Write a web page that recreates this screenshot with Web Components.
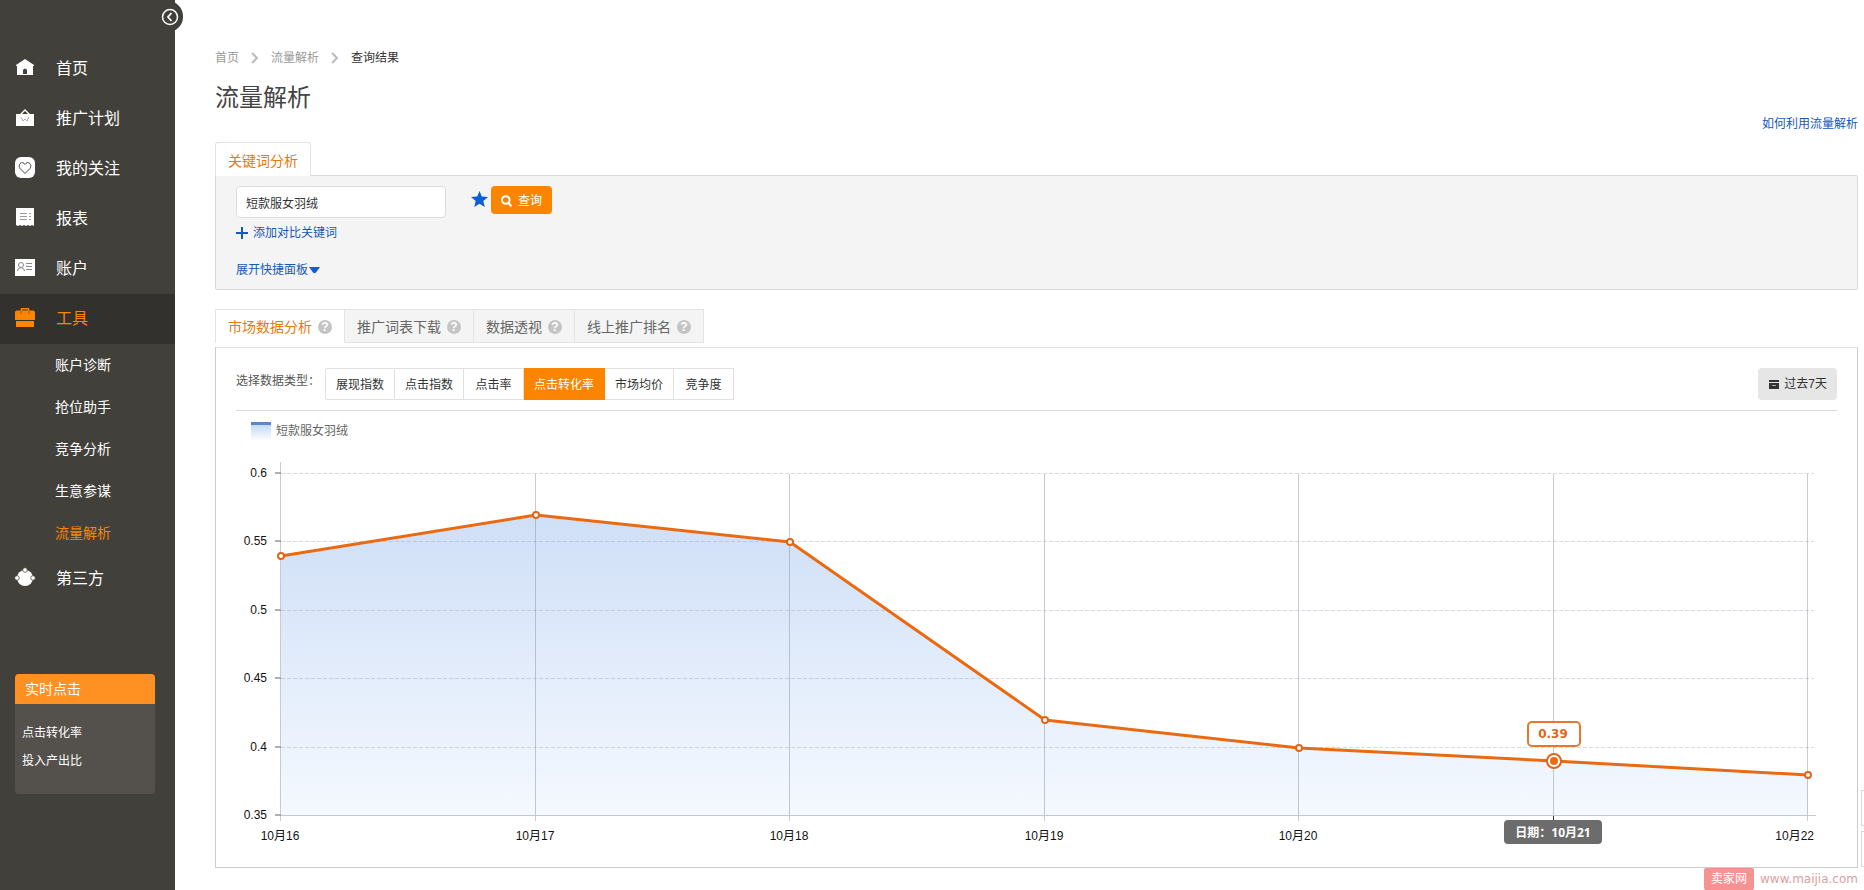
<!DOCTYPE html>
<html lang="zh-CN">
<head>
<meta charset="utf-8">
<title>流量解析</title>
<style>
html, body { margin: 0; }
body {
  font-family: "Liberation Sans", "Noto Sans CJK SC", sans-serif;
  font-size: 12px;
  line-height: 20px;
  color: #333;
  background: #fff;
  --orange: #fb8500;
  --link: #1558b8;
  --line: #d9d9d9;
}
</style>
</head>
<body>
<app-shell>
  <side-bar slot="side">
    <nav-item icon="home" label="首页"></nav-item>
    <nav-item icon="plan" label="推广计划"></nav-item>
    <nav-item icon="heart" label="我的关注"></nav-item>
    <nav-item icon="report" label="报表"></nav-item>
    <nav-item icon="account" label="账户"></nav-item>
    <nav-item icon="tools" label="工具" active></nav-item>
    <nav-item sub label="账户诊断"></nav-item>
    <nav-item sub label="抢位助手"></nav-item>
    <nav-item sub label="竞争分析"></nav-item>
    <nav-item sub label="生意参谋"></nav-item>
    <nav-item sub label="流量解析" active></nav-item>
    <nav-item icon="third" label="第三方"></nav-item>
    <live-card slot="card" heading="实时点击"><span>点击转化率</span><span>投入产出比</span></live-card>
  </side-bar>
  <page-head heading="流量解析"></page-head>
  <keyword-panel></keyword-panel>
  <tab-strip>
    <tab-button active>市场数据分析</tab-button>
    <tab-button>推广词表下载</tab-button>
    <tab-button>数据透视</tab-button>
    <tab-button>线上推广排名</tab-button>
  </tab-strip>
  <chart-panel>
    <data-filter slot="filter"></data-filter>
    <chart-legend slot="legend">短款服女羽绒</chart-legend>
    <trend-chart></trend-chart>
  </chart-panel>
  <site-mark slot="foot"></site-mark>
  <edge-tools slot="edge"></edge-tools>
</app-shell>

<script>
const ICONS = {
  home: '<path fill="currentColor" d="M9 1 18 7v1h-1v9H1V8H0V7z"/><path fill="#42403b" d="M7 16v-4q2-3 4 0v4z"/>',
  plan: '<path fill="currentColor" d="M0 6h4L9 1l5 5h4v12H0z"/><path fill="#42403b" d="M6 6l3-3 3 3z"/><path fill="none" stroke="#aaa" d="M5 9l2 4 2-2 2 2 2-4"/>',
  heart: '<rect x="-1" y="-1" width="20" height="21" rx="6" fill="currentColor"/><path fill="none" stroke="#42403b" d="M9 15.500 4 10.500C2 7.500 4 4.500 6.500 4.500Q8 5 9 6.500 10 5 11.500 4.500C14 4.500 16 7.500 14 10.500z"/>',
  report: '<path fill="currentColor" d="M0 0h18v18l-2-1-2 1-2-1-2 1-2-1-2 1-2-1-2 1-2-1z"/><path stroke="#999" d="M4 5.500h7M4 8.500h7M4 11.500h7M13 5.500h2M13 8.500h2M13 11.500h2"/>',
  account: '<path fill="currentColor" d="M-1 1h20v17H-1z"/><g fill="none" stroke="#888"><circle cx="5" cy="7" r="2.500"/><path d="M1.500 13q0-3 3.500-3.500Q8.500 10 8.500 13M10 5.500h6M10 8.500h6M10 11.500h6"/></g>',
  tools: '<path fill="none" stroke="currentColor" stroke-width="1.500" d="M5.500 3V.700h7V3"/><path fill="currentColor" d="M1 2.500h16q2 0 2 2V12H-1V4.500q0-2 2-2zM0 13h18v6H0z"/><path stroke="#33312d" stroke-width=".5" d="M5 3v3M13 3v3"/>',
  third: '<circle cx="9" cy="10" r="8" fill="currentColor"/><g fill="currentColor" stroke="#42403b" stroke-width=".7"><circle cx="9" cy="2" r="2.300"/><circle cx="1" cy="10" r="2.300"/><circle cx="17" cy="10" r="2.300"/></g>'
};

function define(name, render) {
  customElements.define(name, class extends HTMLElement {
    constructor() { super(); this.attachShadow({ mode: 'open' }); }
    connectedCallback() { this.shadowRoot.innerHTML = render(this); }
  });
}

define('app-shell', () => `
<style>
:host { display: grid; grid-template-columns: 175px minmax(0, 1fr); min-height: 100vh; position: relative; }
.main { display: flex; flex-direction: column; }
main { padding: 47px 6px 0 40px; }
</style>
<slot name="side"></slot>
<div class="main"><main><slot></slot></main><slot name="foot"></slot></div>
<slot name="edge"></slot>`);

define('side-bar', () => `
<style>
:host { display: block; position: relative; background: #42403b; color: #fff; }
nav { padding-top: 44px; }
.card { padding: 70px 20px 20px 15px; }
button { position: absolute; top: 1px; right: -8px; width: 30px; height: 31px; padding: 0 0 0 4px; border: 0; border-radius: 15px; background: #42403b; display: grid; place-items: center; }
</style>
<nav><slot></slot></nav>
<div class="card"><slot name="card"></slot></div>
<button type="button" aria-label="收起"><svg width="18" height="18" viewBox="0 0 18 18" fill="none" stroke="#fff"><circle cx="9" cy="9" r="7.500" stroke-width="1.500"/><path d="M10.500 5 7 9l3.500 4" stroke-width="1.800"/></svg></button>`);

define('nav-item', el => {
  const sub = el.hasAttribute('sub');
  const icon = el.getAttribute('icon');
  return `
<style>
:host { display: block; }
:host([active]) { color: var(--orange); }
:host([active][icon]) { background: #33312d; }
a { display: flex; align-items: center; height: 50px; padding-left: 16px; gap: 22px; color: inherit; text-decoration: none; font-size: 16px; }
a.sub { height: 42px; padding-left: 55px; font-size: 14px; }
svg { width: 18px; height: 18px; margin-bottom: 4px; overflow: visible; }
</style>
<a href="#" class="${sub ? 'sub' : ''}">${icon ? `<svg viewBox="0 0 18 18" aria-hidden="true">${ICONS[icon]}</svg>` : ''}<span>${el.getAttribute('label')}</span></a>`;
});

define('live-card', el => `
<style>
:host { display: block; border-radius: 4px; overflow: hidden; background: #54514c; color: #fff; }
h2 { margin: 0; padding: 0 10px; background: #ff9021; font-size: 14px; line-height: 30px; font-weight: 400; }
.rows { display: grid; grid-auto-rows: 28px; line-height: 28px; padding: 15px 7px 19px; }
</style>
<h2>${el.getAttribute('heading')}</h2><div class="rows"><slot></slot></div>`);

define('page-head', el => {
  const arrow = '<svg width="10" height="12" viewBox="0 0 10 12" fill="none" stroke="#bbb" stroke-width="2" aria-hidden="true"><path d="M2 1l5 5-5 5"/></svg>';
  return `
<style>
:host { display: block; }
nav { display: flex; align-items: center; gap: 11px; height: 22px; }
nav a { color: #999; text-decoration: none; }
h1 { margin: 12px 0 0; font-size: 24px; line-height: 34px; font-weight: 400; color: #444; }
.help { display: flex; justify-content: flex-end; height: 20px; margin-bottom: 7px; line-height: 18px; }
.help a { color: var(--link); text-decoration: none; }
</style>
<nav aria-label="位置"><a href="#">首页</a>${arrow}<a href="#">流量解析</a>${arrow}<span>查询结果</span></nav>
<h1>${el.getAttribute('heading')}</h1>
<div class="help"><a href="#">如何利用流量解析</a></div>`;
});

define('keyword-panel', () => `
<style>
:host { display: block; }
.tab { display: block; width: max-content; margin-bottom: -1px; position: relative; padding: 2px 12px 0; border: 1px solid #e3e3e3; border-bottom: 0; border-radius: 3px 3px 0 0; background: #fff; color: #e8790a; font: inherit; font-size: 14px; line-height: 32px; height: 34px; }
form { border: 1px solid var(--line); border-radius: 0 2px 2px 2px; background: #f4f4f4; padding: 10px 20px 9px; }
.row { display: flex; align-items: flex-start; }
input { box-sizing: border-box; width: 210px; height: 32px; padding: 0 9px; border: 1px solid #ddd; border-radius: 4px; background: #fff; color: #333; font: inherit; }
.star { padding: 0; margin: 5px 3px 0 25px; border: 0; background: none; height: 18px; width: 17px; }
.go { display: flex; align-items: center; justify-content: center; gap: 6px; width: 61px; height: 28px; padding: 2px 0 0; border: 0; border-radius: 4px; background: var(--orange); color: #fff; font: inherit; }
a { display: flex; align-items: center; width: max-content; height: 20px; color: var(--link); text-decoration: none; }
.add { margin-top: 5px; gap: 5px; }
.more { margin-top: 17px; gap: 1px; }
</style>
<button type="button" class="tab">关键词分析</button>
<form>
  <div class="row">
    <input type="text" aria-label="关键词" value="短款服女羽绒">
    <button type="button" class="star" aria-label="关注"><svg width="17" height="16" viewBox="0 0 17 16"><path fill="#0d5fd8" d="M8.500 0l2.300 5.400 6.200.6-4.700 4 1.500 6-5.300-3.200L3.200 16l1.500-6L0 6l6.200-.6z"/></svg></button>
    <button type="button" class="go"><svg width="11" height="12" viewBox="0 0 11 12" fill="none" stroke="#fff" stroke-width="2"><circle cx="4.800" cy="5" r="3.800"/><path d="M7.500 8l3 3.300"/></svg>查询</button>
  </div>
  <a class="add" href="#"><svg width="12" height="12" viewBox="0 0 12 12" stroke="#1558b8" stroke-width="2"><path d="M6 0v12M0 6h12"/></svg>添加对比关键词</a>
  <a class="more" href="#">展开快捷面板<svg width="11" height="7" viewBox="0 0 11 7"><path fill="#0d5fd8" d="M0 0h11L7 5.500Q5.500 7 4 5.500z"/></svg></a>
</form>`);

define('tab-strip', () => `
<style>:host { display: flex; margin: 19px 0 4px; }</style><slot></slot>`);

define('tab-button', el => `
<style>
:host { display: block; }
button { display: flex; align-items: center; gap: 6px; box-sizing: border-box; height: 34px; padding: 2px 12px 0; border: 1px solid #e3e3e3; border-left-width: 0; background: #f4f4f4; color: #666; font: inherit; font-size: 14px; }
:host([active]) button { background: #fff; border-left-width: 1px; border-bottom-color: transparent; color: #e8790a; }
i { width: 14px; height: 14px; border-radius: 7px; background: #c4c4c4; color: #fff; font-style: normal; font-weight: 700; font-size: 12px; line-height: 14px; text-align: center; }
</style>
<button type="button"><slot></slot><i>?</i></button>`);

define('chart-panel', () => `
<style>:host { display: block; border: 1px solid #ccc; border-top-color: #ddd; padding: 20px 20px 19px; }</style>
<slot name="filter"></slot><slot name="legend"></slot><slot></slot>`);

define('data-filter', () => {
  const types = ['展现指数', '点击指数', '点击率', '点击转化率', '市场均价', '竞争度'];
  return `
<style>
:host { display: flex; align-items: flex-start; padding-bottom: 10px; border-bottom: 1px solid var(--line); }
.label { width: 89px; line-height: 26px; color: #555; }
.types { display: flex; flex: 1; }
button { box-sizing: border-box; height: 32px; font: inherit; color: #333; }
.types button { min-width: 60px; padding: 2px 10px 0; border: 1px solid #e0e0e0; border-left-width: 0; background: #fff; }
.types button:first-child { border-left-width: 1px; border-radius: 2px 0 0 2px; }
.types button.on { background: var(--orange); border-color: var(--orange); color: #fff; }
.range { display: flex; align-items: center; gap: 5px; padding: 0 10px 0 11px; border: 0; border-radius: 4px; background: #e6e6e6; }
</style>
<span class="label" id="l">选择数据类型：</span>
<div class="types" role="group" aria-labelledby="l">${types.map((t, i) => `<button type="button"${i === 3 ? ' class="on"' : ''}>${t}</button>`).join('')}</div>
<button type="button" class="range"><svg width="10" height="10" viewBox="0 0 10 10" aria-hidden="true"><path fill="#333" d="M0 1h10v2H0zM0 4h10v6H0z"/><path stroke="#aaa" d="M3 6.500h4"/></svg>过去7天</button>`;
});

define('chart-legend', () => `
<style>
:host { display: flex; align-items: center; gap: 5px; height: 22px; padding: 9px 0 0 15px; color: #666; }
i { width: 20px; height: 19px; box-sizing: border-box; border-top: 3px solid #5b87c5; background: linear-gradient(#c3d9f6, #fff); }
</style><i></i><slot></slot>`);

customElements.define('trend-chart', class extends HTMLElement {
  constructor() {
    super();
    this.attachShadow({ mode: 'open' }).innerHTML = `
<style>
:host { display: block; height: 406px; }
svg { display: block; width: 100%; height: 100%; overflow: visible; }
text { font-size: 12px; fill: #111; }
.value { font: 700 12px "DejaVu Sans", sans-serif; fill: #e0661a; }
.date { font: 700 12px "Noto Sans", "Noto Sans CJK SC", sans-serif; fill: #fff; }
</style><svg role="img" aria-label="点击转化率"></svg>`;
  }
  connectedCallback() {
    this.draw();
    new ResizeObserver(() => this.draw()).observe(this);
  }
  draw() {
    const left = 45, top = 32, bottom = 374;
    const right = this.clientWidth - 29;
    const values = [0.54, 0.57, 0.55, 0.42, 0.4, 0.39, 0.38];
    const days = [16, 17, 18, 19, 20, 21, 22];
    const active = 5;
    const x = i => Math.round(left + (right - left) * i / 6);
    const y = v => Math.round(bottom - (v - 0.35) / 0.25 * (bottom - top));
    const pts = values.map((v, i) => `${x(i)},${y(v)}`).join(' ');
    let s = `<defs><linearGradient id="g" x1="0" y1="0" x2="0" y2="1"><stop offset="0" stop-color="#cfdff7"/><stop offset="1" stop-color="#f5f9ff"/></linearGradient></defs>`;
    s += `<polygon fill="url(#g)" points="${left},${bottom} ${pts} ${right},${bottom}"/>`;
    for (const v of [0.6, 0.55, 0.5, 0.45, 0.4, 0.35]) {
      const gy = y(v) - 0.5;
      if (v > 0.35) s += `<path stroke="#8c96a8" stroke-opacity=".35" stroke-dasharray="4 2" d="M${left} ${gy}H${right + 6}"/>`;
      s += `<path stroke="#b0b0b0" stroke-width="2" d="M${left - 6} ${y(v) - 1}H${left}"/><text x="${left - 14}" y="${y(v) + 3}" text-anchor="end">${v}</text>`;
    }
    days.forEach((d, i) => {
      s += `<path stroke="#8c96a8" stroke-opacity=".5" d="M${x(i) - 0.5} ${i ? top : top - 12}V${bottom + 5}"/>`;
      if (i === active) return;
      s += i === days.length - 1
        ? `<text x="${x(i) + 6}" y="${bottom + 24}" text-anchor="end">10月${d}</text>`
        : `<text x="${x(i) - 1}" y="${bottom + 24}" text-anchor="middle">10月${d}</text>`;
    });
    s += `<path stroke="#c4c8d0" d="M${left} ${bottom - 0.5}H${right + 8}"/>`;
    s += `<polyline fill="none" stroke="#ea6a12" stroke-width="3" stroke-linejoin="round" points="${pts}"/>`;
    values.forEach((v, i) => {
      if (i !== active) s += `<circle cx="${x(i)}" cy="${y(v)}" r="3" fill="#fff" stroke="#e0661a" stroke-width="2"/>`;
    });
    const ax = x(active), ay = y(values[active]);
    s += `<circle cx="${ax}" cy="${ay}" r="7" fill="#fff" stroke="#e0661a" stroke-width="2"/><circle cx="${ax}" cy="${ay}" r="4" fill="#f06a10"/>`;
    s += `<rect x="${ax - 26}" y="${ay - 39}" width="52" height="24" rx="4" fill="#fff" stroke="#e8772e" stroke-width="2"/><text class="value" x="${ax - 1}" y="${ay - 23}" text-anchor="middle">0.39</text>`;
    s += `<path stroke="#333" d="M${ax - 0.5} ${bottom}v5"/><rect x="${ax - 50}" y="${bottom + 4}" width="98" height="24" rx="4" fill="#6c6c6c"/><text class="date" x="${ax - 1}" y="${bottom + 21}" text-anchor="middle">日期：10月21</text>`;
    this.shadowRoot.querySelector('svg').innerHTML = s;
  }
});

define('site-mark', () => `
<style>
:host { display: flex; justify-content: flex-end; gap: 6px; padding-right: 6px; line-height: 22px; font-family: "DejaVu Sans", "Noto Sans CJK SC", sans-serif; }
b { width: 50px; border-radius: 2px; background: #f69292; color: #fff; font-weight: 400; text-align: center; }
a { color: #dba0a4; text-decoration: none; }
</style><b>卖家网</b><a href="#">www.maijia.com</a>`);

define('edge-tools', () => `
<style>
:host { position: absolute; right: 0; bottom: 23px; display: grid; gap: 5px; }
i { box-sizing: border-box; width: 3px; height: 36px; border: 1px solid var(--line); border-right: 0; }
</style><i></i><i></i>`);
</script>
</body>
</html>
